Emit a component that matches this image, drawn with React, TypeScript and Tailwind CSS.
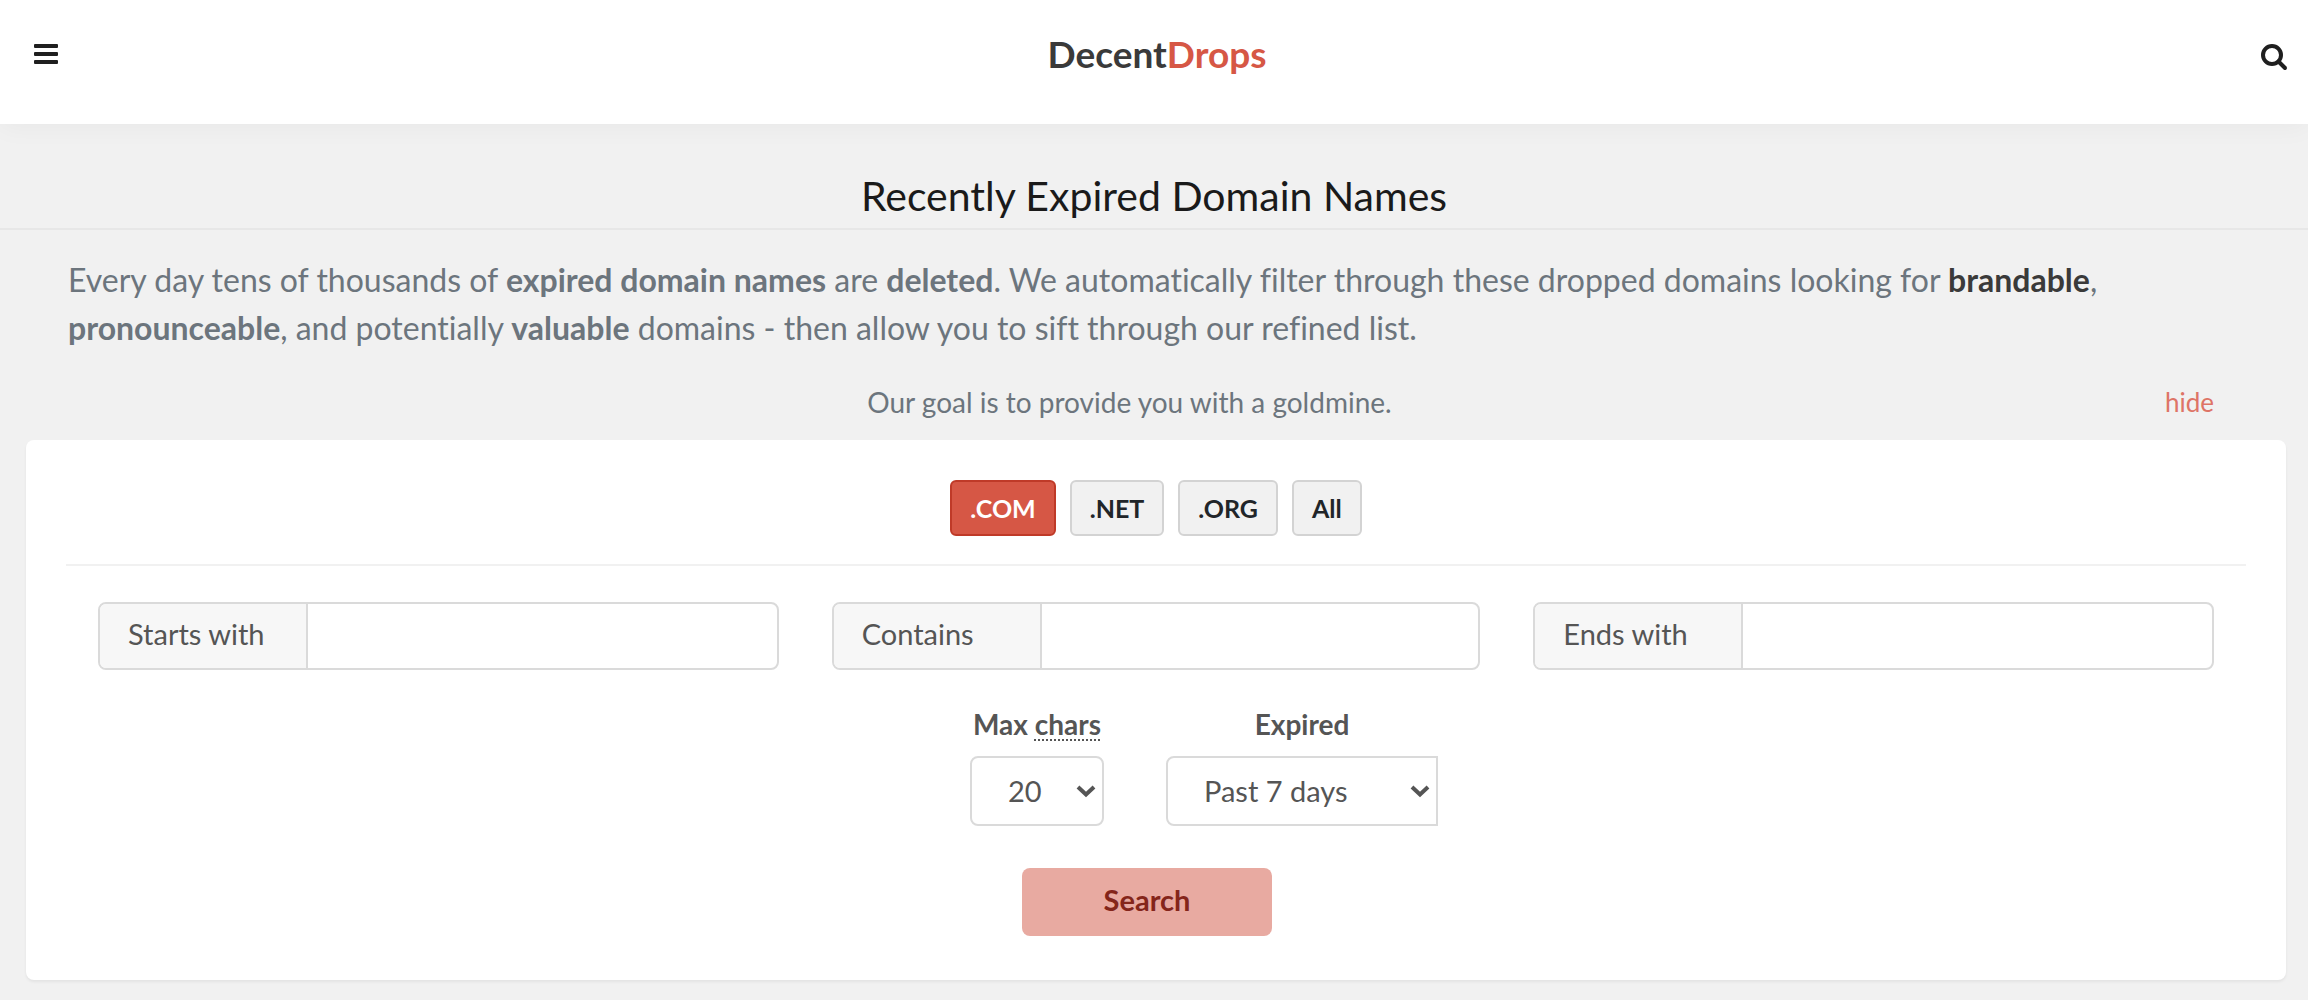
import { useState } from "react";

const tlds = [".COM", ".NET", ".ORG", "All"];

const textFilters = [
  { id: "starts", label: "Starts with", pad: "pl-8 pr-[14px]" },
  { id: "contains", label: "Contains", pad: "px-[39px]" },
  { id: "ends", label: "Ends with", pad: "pl-[14px] pr-8" },
];

function Chevron() {
  return (
    <svg
      className="pointer-events-none absolute right-2 top-7 h-4 w-5"
      viewBox="0 0 20 16"
      fill="none"
      stroke="#555"
      strokeWidth="4"
    >
      <path d="M2 3 L10 10.5 L18 3" />
    </svg>
  );
}

function Header() {
  return (
    <header className="relative flex h-31 items-start justify-between bg-white pl-[34px] pr-5 shadow-[0_4px_24px_rgba(0,0,0,0.04)]">
      <button type="button" aria-label="Menu" className="mt-11">
        <svg className="h-5 w-6" viewBox="0 0 24 20" fill="#1f1f1f">
          <rect width="24" height="4" rx="1" />
          <rect y="8" width="24" height="4" rx="1" />
          <rect y="16" width="24" height="4" rx="1" />
        </svg>
      </button>
      <a
        href="#"
        className="mt-[30px] pr-1 text-[37px] leading-12 font-bold text-[#3a3a3a]"
      >
        Decent<span className="text-[#d65745]">Drops</span>
      </a>
      <button type="button" aria-label="Search" className="mt-11">
        <svg
          className="size-7"
          viewBox="0 0 28 28"
          fill="none"
          stroke="#1f1f1f"
          strokeWidth="4"
        >
          <circle cx="12" cy="11" r="9" />
          <path d="M18.5 17.5 L25 24" strokeLinecap="round" />
        </svg>
      </button>
    </header>
  );
}

export default function App() {
  const [tld, setTld] = useState(".COM");
  const [showIntro, setShowIntro] = useState(true);

  return (
    <div className="min-h-screen bg-[#f1f1f1] pb-5 font-['Lato',sans-serif] text-[#555] [font-variant-ligatures:none]">
      <Header />

      <h1 className="border-b-2 border-[#e7e7e7] pt-11 pb-1 text-center text-[41px] leading-14 text-[#1a1a1a]">
        Recently Expired Domain Names
      </h1>

      {showIntro && (
        <div className="text-[#6c757d]">
          <p className="px-[68px] pt-[26px] text-[32px] leading-12">
            Every day tens of thousands of <b>expired domain names</b> are{" "}
            <b>deleted</b>. We automatically filter through these dropped
            domains looking for <b className="text-[#3a3a3a]">brandable</b>,{" "}
            <b>pronounceable</b>, and potentially <b>valuable</b> domains - then
            allow you to sift through our refined list.
          </p>
          <div className="flex px-[94px] pt-7 pb-4 text-[28px] leading-11">
            <p className="flex-1 text-center">
              Our goal is to provide you with a goldmine.
            </p>
            <button
              type="button"
              onClick={() => setShowIntro(false)}
              className="text-[26px] text-[#de7466]"
            >
              hide
            </button>
          </div>
        </div>
      )}

      <form
        className="mr-[22px] ml-[26px] rounded-lg bg-white px-10 pt-10 pb-11 shadow-[0_2px_3px_rgba(0,0,0,0.06)]"
        onSubmit={(e) => e.preventDefault()}
      >
        <div className="flex justify-center gap-[14px] border-b-2 border-[#f1f1f1] pb-7">
          {tlds.map((name) => (
            <button
              key={name}
              type="button"
              onClick={() => setTld(name)}
              className={`h-14 rounded-md border-2 px-[18px] text-[25px] leading-10 font-bold ${
                tld === name
                  ? "border-[#bf3a28] bg-[#d65745] text-white"
                  : "border-[#d3d3d3] bg-[#f1f1f1] text-[#212529]"
              }`}
            >
              {name}
            </button>
          ))}
        </div>

        <div className="grid grid-cols-3 pt-9 text-[29px]">
          {textFilters.map((filter) => (
            <div key={filter.id} className={filter.pad}>
              <div className="flex h-17 overflow-hidden rounded-lg border-2 border-[#dadada]">
                <label
                  htmlFor={filter.id}
                  className="w-[208px] shrink-0 border-r-2 border-[#dadada] bg-[#f7f7f7] pl-7 leading-[60px]"
                >
                  {filter.label}
                </label>
                <input
                  id={filter.id}
                  type="text"
                  className="min-w-0 flex-1 px-7 outline-none"
                />
              </div>
            </div>
          ))}
        </div>

        <div className="flex justify-center gap-[62px] pt-[34px] pl-24 text-[28px]">
          <div className="text-center">
            <label htmlFor="max" className="block pb-3 leading-10 font-bold">
              Max{" "}
              <abbr
                title="characters"
                className="underline decoration-dotted decoration-2 underline-offset-4"
              >
                chars
              </abbr>
            </label>
            <div className="relative">
              <select
                id="max"
                defaultValue="20"
                className="h-[70px] w-[134px] appearance-none rounded-lg border-2 border-[#dadada] bg-white pl-9 text-left text-[29px] outline-none"
              >
                <option>10</option>
                <option>15</option>
                <option>20</option>
              </select>
              <Chevron />
            </div>
          </div>
          <div className="text-center">
            <label
              htmlFor="expired"
              className="block pb-3 leading-10 font-bold"
            >
              Expired
            </label>
            <div className="relative">
              <select
                id="expired"
                defaultValue="Past 7 days"
                className="h-[70px] w-[272px] appearance-none rounded-l-lg border-2 border-[#dadada] bg-white pl-9 text-left text-[29px] outline-none"
              >
                <option>Today</option>
                <option>Past 7 days</option>
                <option>Past 30 days</option>
              </select>
              <Chevron />
            </div>
          </div>
        </div>

        <div className="flex justify-center pt-[42px] pr-[18px]">
          <button
            type="submit"
            className="h-17 w-[250px] rounded-lg bg-[#e8aaa1] pb-1 text-[29px] font-bold text-[#84251a]"
          >
            Search
          </button>
        </div>
      </form>
    </div>
  );
}
